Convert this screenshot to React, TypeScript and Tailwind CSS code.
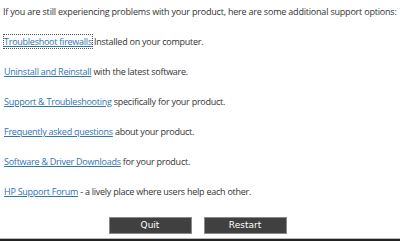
const links = [
  { label: 'Troubleshoot firewalls', rest: ' Installed on your computer.', focus: true },
  { label: 'Uninstall and Reinstall', rest: ' with the latest software.' },
  { label: 'Support & Troubleshooting', rest: ' specifically for your product.' },
  { label: 'Frequently asked questions', rest: ' about your product.' },
  { label: 'Software & Driver Downloads', rest: ' for your product.' },
  { label: 'HP Support Forum', rest: ' - a lively place where users help each other.' },
];

export default function App() {
  return (
    <div className="w-[400px] h-[241px] bg-white flex flex-col font-['Open_Sans',sans-serif] text-[9px] text-[#333]">
      <p className="pl-[3px] pt-[6px] leading-[12px] whitespace-nowrap tracking-[-0.2px]">
        If you are still experiencing problems with your product, here are some additional support options:
      </p>
      <ul className="pl-[4px] pt-[18px] flex flex-col gap-[18px]">
        {links.map((l) => (
          <li key={l.label} className="leading-[12px] tracking-[-0.25px] whitespace-nowrap">
            <a
              href="#"
              className={`text-[#2f73b8] underline ${l.focus ? 'outline outline-1 outline-dotted outline-[#555]' : ''}`}
            >
              {l.label}
            </a>
            {l.rest}
          </li>
        ))}
      </ul>
      <div className="mt-auto flex justify-center gap-[12px] pr-[5px] pb-[4px]">
        <button className="w-[83px] h-[17px] bg-[#404040] border border-[#8a8a8a] text-white text-[9px] font-['DejaVu_Sans',sans-serif] leading-none">
          Quit
        </button>
        <button className="w-[83px] h-[17px] bg-[#404040] border border-[#8a8a8a] text-white text-[9px] font-['DejaVu_Sans',sans-serif] leading-none">
          Restart
        </button>
      </div>
      <div className="h-[1px] bg-[#bbb]" />
      <div className="h-[2px] bg-[#222]" />
    </div>
  );
}
